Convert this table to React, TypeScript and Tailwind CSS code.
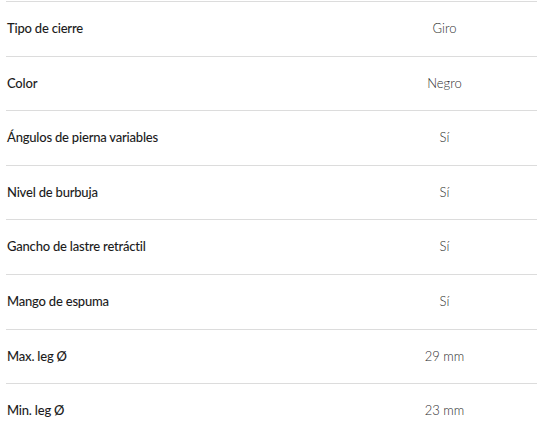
const rows: [string, string][] = [
  ["Tipo de cierre", "Giro"],
  ["Color", "Negro"],
  ["Ángulos de pierna variables", "Sí"],
  ["Nivel de burbuja", "Sí"],
  ["Gancho de lastre retráctil", "Sí"],
  ["Mango de espuma", "Sí"],
  ["Max. leg Ø", "29 mm"],
  ["Min. leg Ø", "23 mm"],
];

export default function App() {
  return (
    <div className="h-[436px] w-[537px] overflow-hidden bg-white pt-px pl-[6px] font-['Lato',sans-serif]">
      {rows.map(([label, value]) => (
        <div
          key={label}
          className="grid h-[54.6px] grid-cols-[346px_1fr] items-center border-t border-[#dcdcdc]"
        >
          <div className="pl-px text-[13px] font-medium tracking-[-0.2px] text-[#1c1c1c]">
            {label}
          </div>
          <div className="text-center text-[13px] font-light text-[#2e2e2e]">{value}</div>
        </div>
      ))}
    </div>
  );
}
